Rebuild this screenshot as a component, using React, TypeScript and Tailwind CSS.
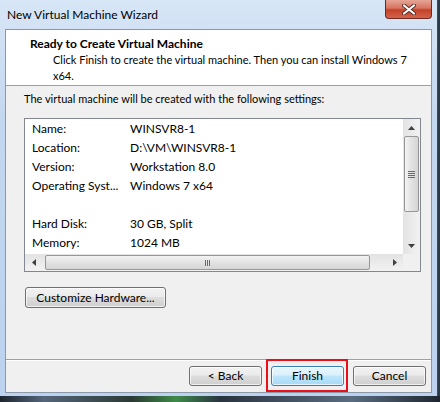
import React from "react";

const font = { fontFamily: 'Lato, "Liberation Sans", sans-serif' };

function Btn({ label, primary = false, className = "" }: { label: string; primary?: boolean; className?: string }) {
  const face = primary
    ? "border-[#3c7fb1] bg-[linear-gradient(to_bottom,#eaf6fd_0%,#d9f0fc_45%,#bee6fd_50%,#a7d9f5_100%)]"
    : "border-[#707070] bg-[linear-gradient(to_bottom,#f2f2f2_0%,#ebebeb_45%,#dddddd_50%,#cfcfcf_100%)]";
  return (
    <div
      className={`flex items-center justify-center rounded-[3px] border text-[12px] text-black shadow-[inset_0_0_0_1px_rgba(255,255,255,0.7)] ${face} ${className}`}
    >
      {label}
    </div>
  );
}

function Arrow({ dir }: { dir: "up" | "down" | "left" | "right" }) {
  const pts = {
    up: "0,4 3.5,0 7,4",
    down: "0,0 3.5,4 7,0",
    left: "4,0 0,3.5 4,7",
    right: "0,0 4,3.5 0,7",
  }[dir];
  const w = dir === "up" || dir === "down" ? 7 : 4;
  const h = dir === "up" || dir === "down" ? 4 : 7;
  return (
    <svg width={w} height={h} viewBox={`0 0 ${w} ${h}`}>
      <polygon points={pts} fill="#404040" />
    </svg>
  );
}

const rows: [string, string][] = [
  ["Name:", "WINSVR8-1"],
  ["Location:", "D:\\VM\\WINSVR8-1"],
  ["Version:", "Workstation 8.0"],
  ["Operating Syst...", "Windows 7 x64"],
  ["", ""],
  ["Hard Disk:", "30 GB, Split"],
  ["Memory:", "1024 MB"],
];

export default function App() {
  return (
    <div className="flex h-[402px] w-[440px] flex-col bg-[#2c3a48] text-black" style={font}>
      <div className="flex h-[396px] w-[438px] flex-col border-r border-[#3e4a58] bg-[linear-gradient(to_bottom,#d7e6f6_0%,#c3d7ef_30%,#bcd2ee_100%)] px-[5px]">
        {/* Title bar */}
        <div className="relative flex h-[29px] shrink-0 items-center pl-[2px]">
          <span className="text-[12px] text-black">New Virtual Machine Wizard</span>
          <div className="absolute right-[0px] top-0 flex h-[19px] w-[47px] items-center justify-center rounded-b-[4px] border border-t-0 border-[#6b2a23] bg-[linear-gradient(to_bottom,#e6a597_0%,#d8745f_45%,#c24229_55%,#d4624a_100%)]">
            <svg width="14" height="11" viewBox="0 0 14 11">
              <path d="M2 1.5 L12 9.5 M12 1.5 L2 9.5" stroke="#5a2b24" strokeWidth="4" strokeLinecap="round" />
              <path d="M2 1.5 L12 9.5 M12 1.5 L2 9.5" stroke="#ffffff" strokeWidth="2.2" strokeLinecap="round" />
            </svg>
          </div>
        </div>

        {/* Client area */}
        <div className="flex h-[364px] flex-col border border-[#8a98aa] bg-[#f0f0f0]">
          {/* Header */}
          <div className="h-[56px] shrink-0 border-b border-[#a0a0a0] bg-white pt-[6px] leading-[16px]">
            <div className="pl-[24px] text-[12px] font-bold">Ready to Create Virtual Machine</div>
            <div className="whitespace-nowrap pl-[47px] text-[11px]">
              Click Finish to create the virtual machine. Then you can install Windows 7
              <br />
              x64.
            </div>
          </div>

          {/* Body */}
          <div className="flex flex-1 flex-col pl-[18px] pr-[10px] pt-[5px] text-[12px] leading-[16px]">
            <div className="text-[11px]">The virtual machine will be created with the following settings:</div>
            <div className="mt-[11px] flex h-[154px] flex-col border border-[#828790] bg-white">
              <div className="flex h-[135px]">
                <div className="flex-1">
                  {rows.map(([k, v], i) => (
                    <div key={i} className="flex h-[19px] items-center pl-[7px]">
                      <span className="w-[98px]">{k}</span>
                      <span>{v}</span>
                    </div>
                  ))}
                </div>
                {/* Vertical scrollbar */}
                <div className="flex w-[17px] flex-col items-center bg-[linear-gradient(to_right,#e3e3e3,#f2f2f2)]">
                  <div className="flex h-[17px] items-center justify-center">
                    <Arrow dir="up" />
                  </div>
                  <div className="flex h-[76px] w-[15px] items-center justify-center rounded-[2px] border border-[#979797] bg-[linear-gradient(to_right,#f3f3f3,#e2e2e2_50%,#d5d5d5)]">
                    <div className="flex flex-col gap-[1px]">
                      <div className="h-px w-[7px] bg-[#6a6a6a]" />
                      <div className="h-px w-[7px] bg-[#6a6a6a]" />
                      <div className="h-px w-[7px] bg-[#6a6a6a]" />
                      <div className="h-px w-[7px] bg-[#6a6a6a]" />
                    </div>
                  </div>
                  <div className="flex-1" />
                  <div className="flex h-[17px] items-center justify-center">
                    <Arrow dir="down" />
                  </div>
                </div>
              </div>
              {/* Horizontal scrollbar */}
              <div className="flex h-[17px]">
                <div className="flex flex-1 items-center bg-[linear-gradient(to_bottom,#e3e3e3,#f2f2f2)]">
                  <div className="flex w-[17px] justify-center">
                    <Arrow dir="left" />
                  </div>
                  <div className="ml-[3px] flex h-[15px] w-[325px] items-center justify-center gap-[1px] rounded-[2px] border border-[#979797] bg-[linear-gradient(to_bottom,#f3f3f3,#e2e2e2_50%,#d5d5d5)]">
                    <div className="h-[6px] w-px bg-[#6a6a6a]" />
                    <div className="h-[6px] w-px bg-[#6a6a6a]" />
                    <div className="h-[6px] w-px bg-[#6a6a6a]" />
                  </div>
                  <div className="flex-1" />
                  <div className="flex w-[17px] justify-center">
                    <Arrow dir="right" />
                  </div>
                </div>
                <div className="w-[17px] bg-[#f0f0f0]" />
              </div>
            </div>
            <Btn label="Customize Hardware..." className="ml-px mt-[15px] h-[21px] w-[141px]" />
          </div>

          {/* Footer */}
          <div className="flex h-[33px] shrink-0 items-center justify-end gap-[9px] border-t border-[#a0a0a0] pr-[5px] shadow-[inset_0_1px_0_#ffffff]">
            <Btn label="< Back" className="h-[20px] w-[73px]" />
            <div className="relative">
              <Btn label="Finish" primary className="h-[20px] w-[73px]" />
              <div className="absolute left-[-5px] top-[-7px] h-[33px] w-[82px] border-2 border-[#e8101a]" />
            </div>
            <Btn label="Cancel" className="h-[20px] w-[73px]" />
          </div>
        </div>
      </div>
      <div className="h-[6px] w-full bg-[linear-gradient(to_right,#1e2630_0%,#55657a_10%,#2b3a33_30%,#3e8a4a_40%,#2a3440_50%,#5a6c80_80%,#1e2630_100%)]" />
    </div>
  );
}
